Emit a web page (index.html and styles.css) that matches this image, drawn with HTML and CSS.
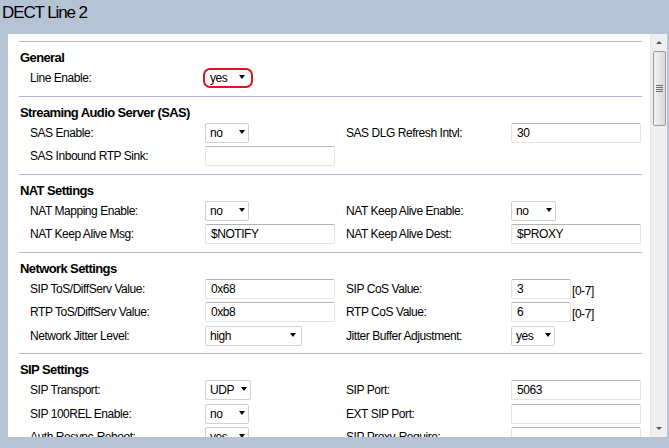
FILE: index.html
```html
<!DOCTYPE html>
<html lang="en">
<head>
  <meta charset="UTF-8">
  <title>DECT Line 2</title>
  <link rel="stylesheet" href="styles.css">
</head>
<body>

  <div class="title">DECT Line 2</div>

  <div class="panel">
    <div class="content">

      <!-- General -->
      <section class="group">
        <h3>General</h3>
        <div class="rows">
          <span class="label">Line Enable:</span>
          <span class="ctl"><span class="select w44 marked">yes</span></span>
        </div>
      </section>

      <!-- SAS -->
      <section class="group">
        <h3>Streaming Audio Server (SAS)</h3>
        <div class="rows">
          <span class="label">SAS Enable:</span>
          <span class="ctl"><span class="select w44">no</span></span>
          <span class="label">SAS DLG Refresh Intvl:</span>
          <span class="ctl"><span class="input">30</span></span>

          <span class="label">SAS Inbound RTP Sink:</span>
          <span class="ctl"><span class="input"></span></span>
        </div>
      </section>

      <!-- NAT -->
      <section class="group">
        <h3>NAT Settings</h3>
        <div class="rows">
          <span class="label">NAT Mapping Enable:</span>
          <span class="ctl"><span class="select w44">no</span></span>
          <span class="label">NAT Keep Alive Enable:</span>
          <span class="ctl"><span class="select w45">no</span></span>

          <span class="label">NAT Keep Alive Msg:</span>
          <span class="ctl"><span class="input">$NOTIFY</span></span>
          <span class="label">NAT Keep Alive Dest:</span>
          <span class="ctl"><span class="input">$PROXY</span></span>
        </div>
      </section>

      <!-- Network -->
      <section class="group">
        <h3>Network Settings</h3>
        <div class="rows">
          <span class="label">SIP ToS/DiffServ Value:</span>
          <span class="ctl"><span class="input">0x68</span></span>
          <span class="label">SIP CoS Value:</span>
          <span class="ctl"><span class="input small">3</span><span class="range">[0-7]</span></span>

          <span class="label">RTP ToS/DiffServ Value:</span>
          <span class="ctl"><span class="input">0xb8</span></span>
          <span class="label">RTP CoS Value:</span>
          <span class="ctl"><span class="input small">6</span><span class="range">[0-7]</span></span>

          <span class="label">Network Jitter Level:</span>
          <span class="ctl"><span class="select w97">high</span></span>
          <span class="label">Jitter Buffer Adjustment:</span>
          <span class="ctl"><span class="select w44">yes</span></span>
        </div>
      </section>

      <!-- SIP -->
      <section class="group">
        <h3>SIP Settings</h3>
        <div class="rows">
          <span class="label">SIP Transport:</span>
          <span class="ctl"><span class="select w46">UDP</span></span>
          <span class="label">SIP Port:</span>
          <span class="ctl"><span class="input">5063</span></span>

          <span class="label">SIP 100REL Enable:</span>
          <span class="ctl"><span class="select w44">no</span></span>
          <span class="label">EXT SIP Port:</span>
          <span class="ctl"><span class="input"></span></span>

          <span class="label">Auth Resync-Reboot:</span>
          <span class="ctl"><span class="select w44">yes</span></span>
          <span class="label">SIP Proxy-Require:</span>
          <span class="ctl"><span class="input"></span></span>
        </div>
      </section>

    </div>

    <div class="scrollbar">
      <span class="arrow up"></span>
      <span class="thumb"><span class="grip"></span></span>
      <span class="track"></span>
      <span class="arrow down"></span>
    </div>
  </div>

</body>
</html>
```

FILE: styles.css
```css
body {
  margin: 0;
  padding: 0;
  background-color: #b5c3d5;
  font-family: "Liberation Sans", Arial, sans-serif;
  color: #000;
  overflow: hidden;
}

.title {
  height: 34px;
  box-sizing: border-box;
  padding: 3px 0 0 2px;
  font-size: 17px;
  line-height: 20px;
  letter-spacing: -1.1px;
}

.panel {
  display: flex;
  margin-left: 8px;
  width: 659px;
  height: 403px;
  background-color: #fff;
}

.content {
  flex: 1;
  overflow: hidden;
  padding: 7px 8px 0 11px;
}

.group {
  border-top: 1px solid #b4b4dc;
  padding: 6px 0 7.5px 0;
}

.group h3 {
  margin: 0;
  padding-left: 1px;
  font-size: 13px;
  line-height: 20px;
  font-weight: bold;
  letter-spacing: -0.6px;
}

.rows {
  display: grid;
  grid-template-columns: 175px 141px 165px 130px;
  grid-auto-rows: 20px;
  row-gap: 3.5px;
  padding-left: 11px;
  font-size: 12px;
  letter-spacing: -0.45px;
}

.label {
  display: flex;
  align-items: center;
  white-space: nowrap;
}

.ctl {
  display: flex;
  align-items: flex-start;
}

.input {
  display: flex;
  align-items: center;
  width: 130px;
  height: 20px;
  box-sizing: border-box;
  padding-left: 5px;
  border: 1px solid #e0e4ea;
  border-top-color: #b1b3b8;
  border-radius: 2px;
  background-color: #fff;
}

.input.small {
  width: 60px;
  flex-shrink: 0;
}

.range {
  align-self: flex-end;
  line-height: 15px;
  padding-left: 1px;
}

.select {
  position: relative;
  display: flex;
  align-items: center;
  height: 20px;
  box-sizing: border-box;
  padding-left: 4px;
  border: 1px solid #cfcfcf;
  border-radius: 2px;
  background-color: #fff;
}

.select::after {
  content: "";
  position: absolute;
  right: 3px;
  top: 6px;
  border-left: 3.5px solid transparent;
  border-right: 3.5px solid transparent;
  border-top: 4px solid #000;
}

.w44 { width: 44px; }
.w45 { width: 45px; }
.w46 { width: 46px; }
.w97 { width: 97px; }

.w97::after { right: 5px; }

/* the highlighted control */
.select.marked {
  width: 50px;
  margin-left: -2px;
  padding-left: 5px;
  border: 2px solid #e0141e;
  border-radius: 7px;
}

.select.marked::after {
  right: 6px;
  top: 5px;
}

/* fake scrollbar */
.scrollbar {
  width: 16px;
  display: flex;
  flex-direction: column;
  align-items: center;
  background-color: #efefef;
  border-left: 1px solid #e6e6e6;
}

.scrollbar .arrow {
  width: 16px;
  height: 17px;
  position: relative;
  flex-shrink: 0;
}

.scrollbar .arrow::after {
  content: "";
  position: absolute;
  left: 5px;
  top: 7px;
  border-left: 3px solid transparent;
  border-right: 3px solid transparent;
}

.scrollbar .up::after {
  border-bottom: 3px solid #555;
}

.scrollbar .down::after {
  border-top: 3px solid #555;
}

.thumb {
  width: 13px;
  height: 75px;
  box-sizing: border-box;
  border: 1px solid #9a9a9a;
  border-radius: 2px;
  background: linear-gradient(to right, #f2f2f2, #dadada);
  display: flex;
  align-items: center;
  justify-content: center;
}

.grip {
  width: 7px;
  height: 7px;
  background: repeating-linear-gradient(to bottom, #6b6b6b 0, #6b6b6b 1px, transparent 1px, transparent 2px);
}

.track {
  flex: 1;
}
```
